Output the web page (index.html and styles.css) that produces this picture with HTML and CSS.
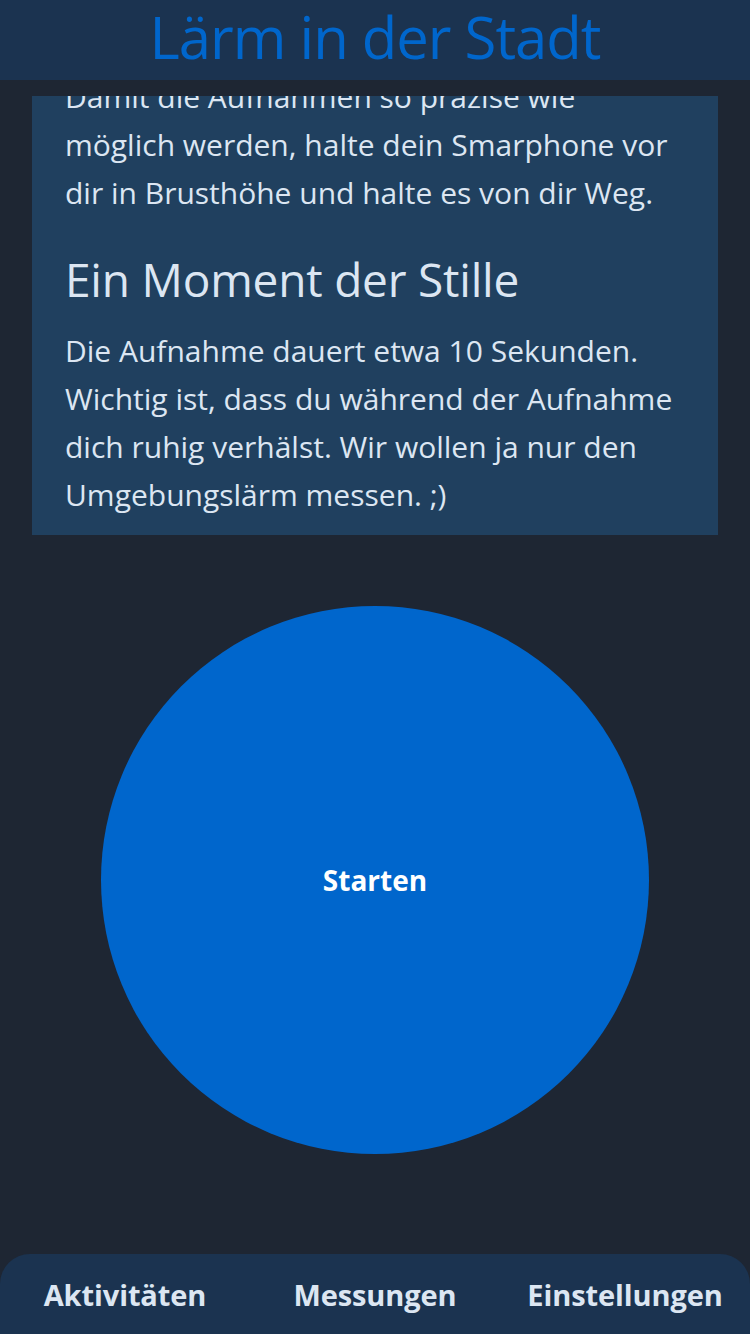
FILE: index.html
```html
<!DOCTYPE html>
<html lang="de">
<head>
<meta charset="utf-8">
<title>Lärm in der Stadt</title>
<link rel="stylesheet" href="styles.css">
</head>
<body>
<div class="app">
  <header class="topbar">
    <h1 class="title">Lärm in der Stadt</h1>
  </header>
  <main class="content">
    <section class="card">
      <p class="text">Damit die Aufnahmen so präzise wie<br>möglich werden, halte dein Smarphone vor<br>dir in Brusthöhe und halte es von dir Weg.</p>
      <h2 class="heading">Ein Moment der Stille</h2>
      <p class="text">Die Aufnahme dauert etwa 10 Sekunden.<br>Wichtig ist, dass du während der Aufnahme<br>dich ruhig verhälst. Wir wollen ja nur den<br>Umgebungslärm messen. ;)</p>
    </section>
    <div class="start-wrap">
      <button class="start">Starten</button>
    </div>
  </main>
  <nav class="tabbar">
    <span class="tab">Aktivitäten</span>
    <span class="tab">Messungen</span>
    <span class="tab">Einstellungen</span>
  </nav>
</div>
</body>
</html>
```

FILE: styles.css
```css
html, body {
  margin: 0;
  padding: 0;
}
body {
  background: #1e2633;
  font-family: "Open Sans", "Noto Sans", sans-serif;
  color: #dce6f2;
}
.app {
  width: 750px;
  height: 1334px;
  display: flex;
  flex-direction: column;
  overflow: hidden;
}
.topbar {
  height: 80px;
  flex: 0 0 80px;
  background: #1b3350;
  display: flex;
  justify-content: center;
}
.title {
  margin: 0;
  font-weight: 400;
  font-size: 58px;
  letter-spacing: -1px;
  color: #0066cc;
  line-height: 74px;
}
.content {
  flex: 1;
  margin-top: 16px;
  overflow: hidden;
  display: flex;
  flex-direction: column;
}
.card {
  margin: -50px 32px 0;
  padding: 27px 33px 16px;
  background: #20405f;
}
.text {
  margin: 0;
  font-size: 30px;
  line-height: 48px;
  white-space: nowrap;
}
.heading {
  margin: 34px 0 20px;
  font-weight: 400;
  font-size: 46px;
  line-height: 56px;
  letter-spacing: -0.2px;
}
.start-wrap {
  display: flex;
  justify-content: center;
  margin-top: 71px;
}
.start {
  width: 548px;
  height: 548px;
  border-radius: 50%;
  border: none;
  background: #0066cc;
  color: #ffffff;
  font-family: "Open Sans", "Noto Sans", sans-serif;
  font-weight: 700;
  font-size: 28px;
  padding: 0;
}
.tabbar {
  height: 80px;
  flex: 0 0 80px;
  background: #1b3350;
  border-radius: 30px 30px 0 0;
  display: grid;
  grid-template-columns: repeat(3, 1fr);
  align-items: center;
}
.tab {
  text-align: center;
  font-weight: 700;
  font-size: 29px;
  letter-spacing: -0.1px;
  color: #dce6f2;
}
```
